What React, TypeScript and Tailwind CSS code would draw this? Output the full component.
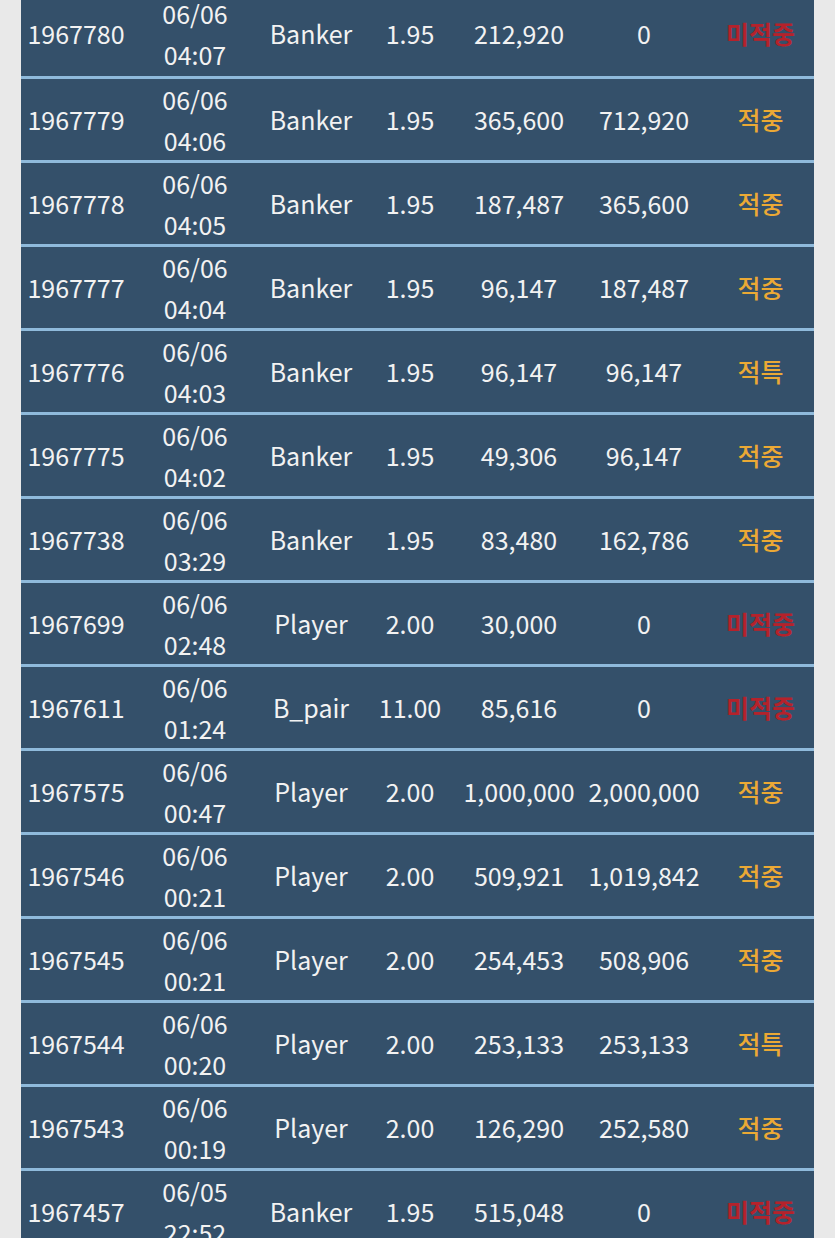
const ROWS = [
  ['1967780', '06/06', '04:07', 'Banker', '1.95', '212,920', '0', 'miss'],
  ['1967779', '06/06', '04:06', 'Banker', '1.95', '365,600', '712,920', 'hit'],
  ['1967778', '06/06', '04:05', 'Banker', '1.95', '187,487', '365,600', 'hit'],
  ['1967777', '06/06', '04:04', 'Banker', '1.95', '96,147', '187,487', 'hit'],
  ['1967776', '06/06', '04:03', 'Banker', '1.95', '96,147', '96,147', 'push'],
  ['1967775', '06/06', '04:02', 'Banker', '1.95', '49,306', '96,147', 'hit'],
  ['1967738', '06/06', '03:29', 'Banker', '1.95', '83,480', '162,786', 'hit'],
  ['1967699', '06/06', '02:48', 'Player', '2.00', '30,000', '0', 'miss'],
  ['1967611', '06/06', '01:24', 'B_pair', '11.00', '85,616', '0', 'miss'],
  ['1967575', '06/06', '00:47', 'Player', '2.00', '1,000,000', '2,000,000', 'hit'],
  ['1967546', '06/06', '00:21', 'Player', '2.00', '509,921', '1,019,842', 'hit'],
  ['1967545', '06/06', '00:21', 'Player', '2.00', '254,453', '508,906', 'hit'],
  ['1967544', '06/06', '00:20', 'Player', '2.00', '253,133', '253,133', 'push'],
  ['1967543', '06/06', '00:19', 'Player', '2.00', '126,290', '252,580', 'hit'],
  ['1967457', '06/05', '22:52', 'Banker', '1.95', '515,048', '0', 'miss'],
]

const RESULT: Record<string, { label: string; cls: string }> = {
  hit: { label: '적중', cls: 'font-medium text-[#eba935]' },
  push: { label: '적특', cls: 'font-medium text-[#eba935]' },
  miss: { label: '미적중', cls: 'font-bold text-[#b5222b]' },
}

export default function App() {
  return (
    <div
      className="h-[1238px] overflow-hidden bg-[#e9e9e9] pl-[21px] pr-[21px]"
      style={{ fontFamily: '"Noto Sans CJK KR", "Noto Sans", sans-serif' }}
    >
      <div className="-mt-[8px] bg-[#34506a] text-[25px] text-[#f2f2f2]">
        {ROWS.map((r, i) => (
          <div
            key={r[0]}
            className={`grid h-[84px] grid-cols-[110px_128px_104px_94px_124px_126px_107px] items-center text-center ${
              i > 0 ? 'border-t-[3px] border-[#8fbadb]' : 'h-[81px]'
            }`}
          >
            <div>{r[0]}</div>
            <div className="flex flex-col leading-[41px]">
              <span>{r[1]}</span>
              <span>{r[2]}</span>
            </div>
            <div>{r[3]}</div>
            <div>{r[4]}</div>
            <div>{r[5]}</div>
            <div>{r[6]}</div>
            <div className={RESULT[r[7]].cls}>{RESULT[r[7]].label}</div>
          </div>
        ))}
      </div>
    </div>
  )
}
